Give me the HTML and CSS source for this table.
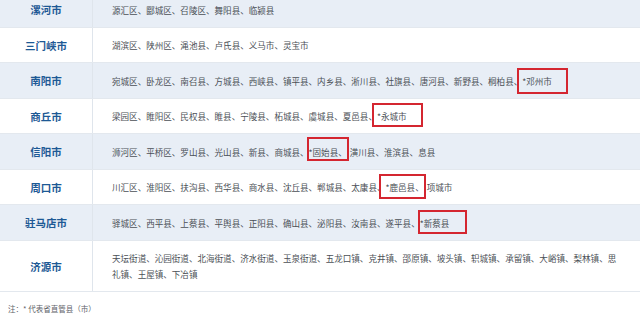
FILE: index.html
```html
<!DOCTYPE html>
<html lang="zh-CN">
<head>
<meta charset="utf-8">
<link rel="stylesheet" href="styles.css">
</head>
<body>
<div class="page">
  <div class="table">
    <div class="row alt">
      <div class="city">漯河市</div>
      <div class="areas">源汇区、郾城区、召陵区、舞阳县、临颍县</div>
    </div>
    <div class="row">
      <div class="city">三门峡市</div>
      <div class="areas">湖滨区、陕州区、渑池县、卢氏县、义马市、灵宝市</div>
    </div>
    <div class="row alt">
      <div class="city">南阳市</div>
      <div class="areas">宛城区、卧龙区、南召县、方城县、西峡县、镇平县、内乡县、淅川县、社旗县、唐河县、新野县、桐柏县、<span class="mark m1">*邓州市</span></div>
    </div>
    <div class="row">
      <div class="city">商丘市</div>
      <div class="areas">梁园区、睢阳区、民权县、睢县、宁陵县、柘城县、虞城县、夏邑县、<span class="mark m2">*永城市</span></div>
    </div>
    <div class="row alt">
      <div class="city">信阳市</div>
      <div class="areas">浉河区、平桥区、罗山县、光山县、新县、商城县、<span class="mark m3">*固始县、</span>潢川县、淮滨县、息县</div>
    </div>
    <div class="row">
      <div class="city">周口市</div>
      <div class="areas">川汇区、淮阳区、扶沟县、西华县、商水县、沈丘县、郸城县、太康县、<span class="mark m4">*鹿邑县、</span>项城市</div>
    </div>
    <div class="row alt">
      <div class="city">驻马店市</div>
      <div class="areas">驿城区、西平县、上蔡县、平舆县、正阳县、确山县、泌阳县、汝南县、遂平县、<span class="mark m5">*新蔡县</span></div>
    </div>
    <div class="row">
      <div class="city">济源市</div>
      <div class="areas">天坛街道、沁园街道、北海街道、济水街道、玉泉街道、五龙口镇、克井镇、邵原镇、坡头镇、轵城镇、承留镇、大峪镇、梨林镇、思礼镇、王屋镇、下冶镇</div>
    </div>
  </div>
  <p class="note">注：* 代表省直管县（市）</p>
</div>
</body>
</html>
```

FILE: styles.css
```css
html, body {
  margin: 0;
  padding: 0;
  background: #ffffff;
}

body {
  width: 640px;
  height: 318px;
  overflow: hidden;
  font-family: "Noto Sans CJK SC", "Noto Sans", sans-serif;
}

.page {
  display: flow-root;
}

.table {
  margin-top: -7.75px;
}

.row {
  display: grid;
  grid-template-columns: 93px 1fr;
  border-bottom: 1px solid #e3e8ee;
  background: #ffffff;
}

.row.alt {
  background: #e8eef6;
}

.city {
  display: flex;
  align-items: center;
  justify-content: center;
  border-right: 1px solid #dfe5ec;
  font-size: 10.5px;
  font-weight: 700;
  color: #1d5995;
}

.areas {
  padding: 9.25px 18px 9.25px 19px;
  font-size: 8.56px;
  line-height: 16px;
  color: #4b5056;
}

.mark {
  border: 2px solid #d42630;
}

.m1 { padding: 4.8px 14px 5.8px 3px; margin: 0 -16px 0 -5px; }
.m2 { padding: 4.8px 14px 2.8px 3.4px; margin: 0 -16px 0 -5.4px; }
.m3 { padding: 6.8px 0 1.8px 0; margin: 0 1px 0 -2px; }
.m4 { padding: 4.8px 0 3.8px 5px; margin: 0 1px 0 -7px; }
.m5 { padding: 4.8px 16px 3.8px 0; margin: 0 -18px 0 -2px; }

.note {
  margin: 9px 0 0;
  padding-left: 8px;
  font-size: 7.5px;
  line-height: 16px;
  color: #5f646a;
}
```
